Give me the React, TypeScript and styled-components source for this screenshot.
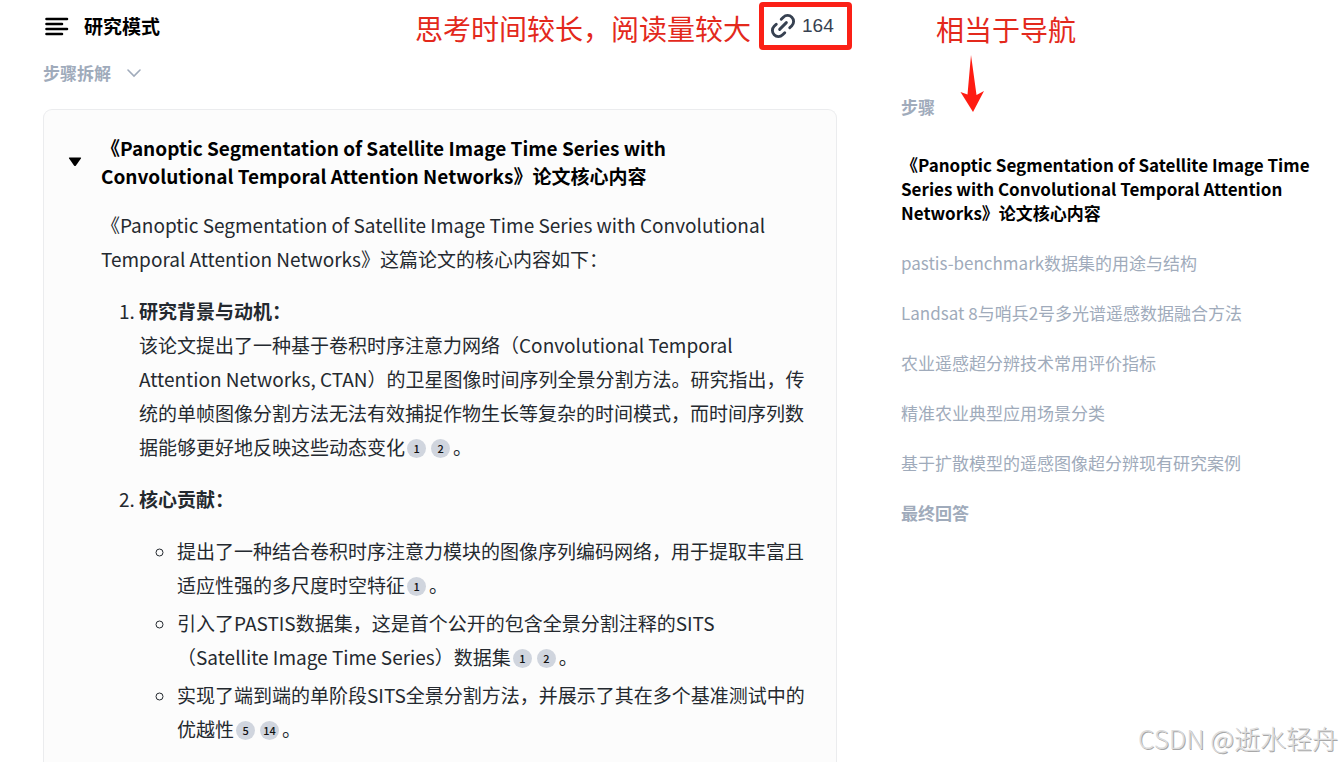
import React from 'react';
import styled, { createGlobalStyle } from 'styled-components';

const GlobalStyle = createGlobalStyle`
  *, *::before, *::after { box-sizing: border-box; }
  body {
    margin: 0;
    background: #fff;
    color: #24292f;
    font-family: 'Noto Sans CJK SC', sans-serif;
    font-size: 19px;
    line-height: 34px;
  }
  h1, h2, h3, p, ol, ul { margin: 0; padding: 0; }
  button { font: inherit; color: inherit; background: none; border: 0; padding: 0; cursor: pointer; }
  a { color: inherit; text-decoration: none; }
`;

const Page = styled.div`
  position: relative;
  display: flex;
  gap: 64px;
  min-height: 100vh;
  padding: 0 24px 0 43px;
`;

const Main = styled.main`
  flex: 1;
  min-width: 0;
  display: flex;
  flex-direction: column;
`;

const Header = styled.header`
  display: flex;
  align-items: center;
  height: 52px;
`;

const Title = styled.h1`
  margin-left: 14px;
  color: #000;
  font-size: 19px;
  font-weight: 700;
`;

const Annotation = styled.span`
  color: #e3291c;
  font-size: 28px;
  line-height: 40px;
  white-space: nowrap;
`;

const HeaderNote = styled(Annotation)`
  margin: 4px 8px 0 auto;
`;

const SourceCount = styled.button`
  display: flex;
  align-items: center;
  gap: 4px;
  width: 93px;
  height: 48px;
  margin-right: -15px;
  padding-left: 4px;
  border: 5px solid #fb2016;
  border-radius: 4px;
  color: #374151;
  font-family: 'Liberation Sans', sans-serif;
  font-size: 19px;
`;

const Breakdown = styled.button`
  display: flex;
  align-items: center;
  align-self: flex-start;
  gap: 16px;
  height: 24px;
  margin: 9px 0 24px;
  color: #a0abbb;
  font-size: 17px;
  font-weight: 700;
`;

const Card = styled.section`
  flex: 1;
  padding: 24px 24px 15px;
  border: 1px solid #ebecee;
  border-bottom: 0;
  border-radius: 9px 9px 0 0;
  background: #fcfcfc;
`;

const CardHead = styled.div`
  display: flex;
  align-items: center;
  gap: 19px;
`;

const Toggle = styled.button`
  display: flex;
  width: 14px;
`;

const CardTitle = styled.h2`
  flex: 1;
  padding-right: 40px;
  color: #000;
  font-size: 19px;
  font-weight: 700;
  line-height: 28px;
`;

const CardBody = styled.div`
  padding: 18px 0 0 33px;
`;

const Points = styled.ol`
  padding-left: 38px;
  > li { margin-top: 18px; }
`;

const SubPoints = styled.ul`
  margin-top: 18px;
  padding-left: 38px;
  list-style: circle;
  > li + li { margin-top: 4px; }
`;

const Phrase = styled.span`
  white-space: nowrap;
`;

const Cite = styled.a`
  display: inline-flex;
  align-items: center;
  justify-content: center;
  width: 19px;
  height: 19px;
  margin: 0 3px 0 2px;
  border-radius: 50%;
  background: #d0d5de;
  color: #111;
  font-size: 11px;
  font-weight: 500;
  line-height: 19px;
  vertical-align: 2px;
`;

const Sidebar = styled.aside`
  position: relative;
  width: 417px;
  padding-top: 9px;
`;

const SideNote = styled(Annotation)`
  display: block;
  padding-left: 35px;
`;

const Arrow = styled.svg`
  position: absolute;
  left: 58px;
  top: 54px;
`;

const SideLabel = styled.h2`
  margin-top: 46px;
  color: #a0abbb;
  font-size: 17px;
  font-weight: 700;
  line-height: 24px;
`;

const Steps = styled.ol`
  display: flex;
  flex-direction: column;
  gap: 26px;
  margin-top: 34px;
  list-style: none;
`;

const Step = styled.li<{ $active?: boolean; $strong?: boolean }>`
  color: ${p => (p.$active ? '#000' : '#a0abbb')};
  font-size: 17px;
  font-weight: ${p => (p.$strong || p.$active ? 700 : 400)};
  line-height: 24px;
`;

const Watermark = styled.div`
  position: absolute;
  right: 4px;
  bottom: 6px;
  color: #dcdcdc;
  font-size: 26px;
  font-weight: 300;
  line-height: 36px;
  text-shadow: 1px 1px 0 #a8a8a8;
`;

const steps = [
  { text: '《Panoptic Segmentation of Satellite Image Time Series with Convolutional Temporal Attention Networks》论文核心内容', active: true },
  { text: 'pastis-benchmark数据集的用途与结构' },
  { text: 'Landsat 8与哨兵2号多光谱遥感数据融合方法' },
  { text: '农业遥感超分辨技术常用评价指标' },
  { text: '精准农业典型应用场景分类' },
  { text: '基于扩散模型的遥感图像超分辨现有研究案例' },
  { text: '最终回答', strong: true },
];

const MenuIcon = () => (
  <svg width="27" height="24" viewBox="0 0 27 24" fill="none" stroke="#000" strokeWidth="2.6" strokeLinecap="round" aria-hidden="true">
    <path d="M3.500 5h20.500M3.500 10h15.500M3.500 15h20.500M3.500 20h15.500" />
  </svg>
);

const LinkIcon = () => (
  <svg width="30" height="30" viewBox="0 0 24 24" fill="none" stroke="currentColor" strokeWidth="2.3" strokeLinecap="round" aria-hidden="true">
    <g transform="rotate(-45 12 12)">
      <path d="M9.200 16.800H6.800A4.800 4.800 0 0 1 6.800 7.200h2.400M14.800 7.200h2.400a4.800 4.800 0 1 1 0 9.600h-2.400M8.200 12h7.600" />
    </g>
  </svg>
);

export default function App() {
  return (
    <>
      <GlobalStyle />
      <Page>
        <Main>
          <Header>
            <MenuIcon />
            <Title>研究模式</Title>
            <HeaderNote>思考时间较长，阅读量较大</HeaderNote>
            <SourceCount>
              <LinkIcon />
              164
            </SourceCount>
          </Header>
          <Breakdown>
            步骤拆解
            <svg width="14" height="9" viewBox="0 0 14 9" fill="none" stroke="currentColor" strokeWidth="1.6" strokeLinecap="round" aria-hidden="true">
              <path d="M1 1l6 6 6-6" />
            </svg>
          </Breakdown>
          <Card>
            <CardHead>
              <Toggle aria-label="收起">
                <svg width="14" height="10" viewBox="0 0 14 10" aria-hidden="true">
                  <path d="M1.5 .5h11q1 0 .4.9L8 8.5q-1 1-2 0L1.1 1.4Q.5.5 1.500.5z" />
                </svg>
              </Toggle>
              <CardTitle>
                《Panoptic Segmentation of Satellite Image Time Series with Convolutional Temporal Attention Networks》论文核心内容
              </CardTitle>
            </CardHead>
            <CardBody>
              <p>
                《Panoptic Segmentation of Satellite Image Time Series with Convolutional Temporal Attention Networks》这篇论文的核心内容如下：
              </p>
              <Points>
                <li>
                  <strong>研究背景与动机：</strong><br />
                  该论文提出了一种基于卷积时序注意力网络（Convolutional Temporal Attention Networks, CTAN）的卫星图像时间序列全景分割方法。研究指出，传统的单帧图像分割方法无法有效捕捉作物生长等复杂的时间模式，而时间序列数据能够更好地反映这些动态变化<Cite href="#1">1</Cite><Cite href="#2">2</Cite>。
                </li>
                <li>
                  <strong>核心贡献：</strong>
                  <SubPoints>
                    <li>提出了一种结合卷积时序注意力模块的图像序列编码网络，用于提取丰富且适应性强的多尺度时空特征<Cite href="#1">1</Cite>。</li>
                    <li>引入了PASTIS数据集，这是首个公开的包含全景分割注释的SITS<Phrase>（Satellite Image Time Series）</Phrase>数据集<Cite href="#1">1</Cite><Cite href="#2">2</Cite>。</li>
                    <li>实现了端到端的单阶段SITS全景分割方法，并展示了其在多个基准测试中的优越性<Cite href="#5">5</Cite><Cite href="#14">14</Cite>。</li>
                  </SubPoints>
                </li>
              </Points>
            </CardBody>
          </Card>
        </Main>
        <Sidebar>
          <SideNote>相当于导航</SideNote>
          <Arrow width="27" height="58" viewBox="0 0 27 58" fill="#fe1c12" aria-hidden="true">
            <path d="M12 1L17.500 41L25 37L14 58L1.500 38L8.500 40.500Z" />
          </Arrow>
          <SideLabel>步骤</SideLabel>
          <nav>
            <Steps>
              {steps.map(s => (
                <Step key={s.text} $active={s.active} $strong={s.strong}>
                  <a href="#step">{s.text}</a>
                </Step>
              ))}
            </Steps>
          </nav>
        </Sidebar>
        <Watermark>CSDN @逝水轻舟</Watermark>
      </Page>
    </>
  );
}
